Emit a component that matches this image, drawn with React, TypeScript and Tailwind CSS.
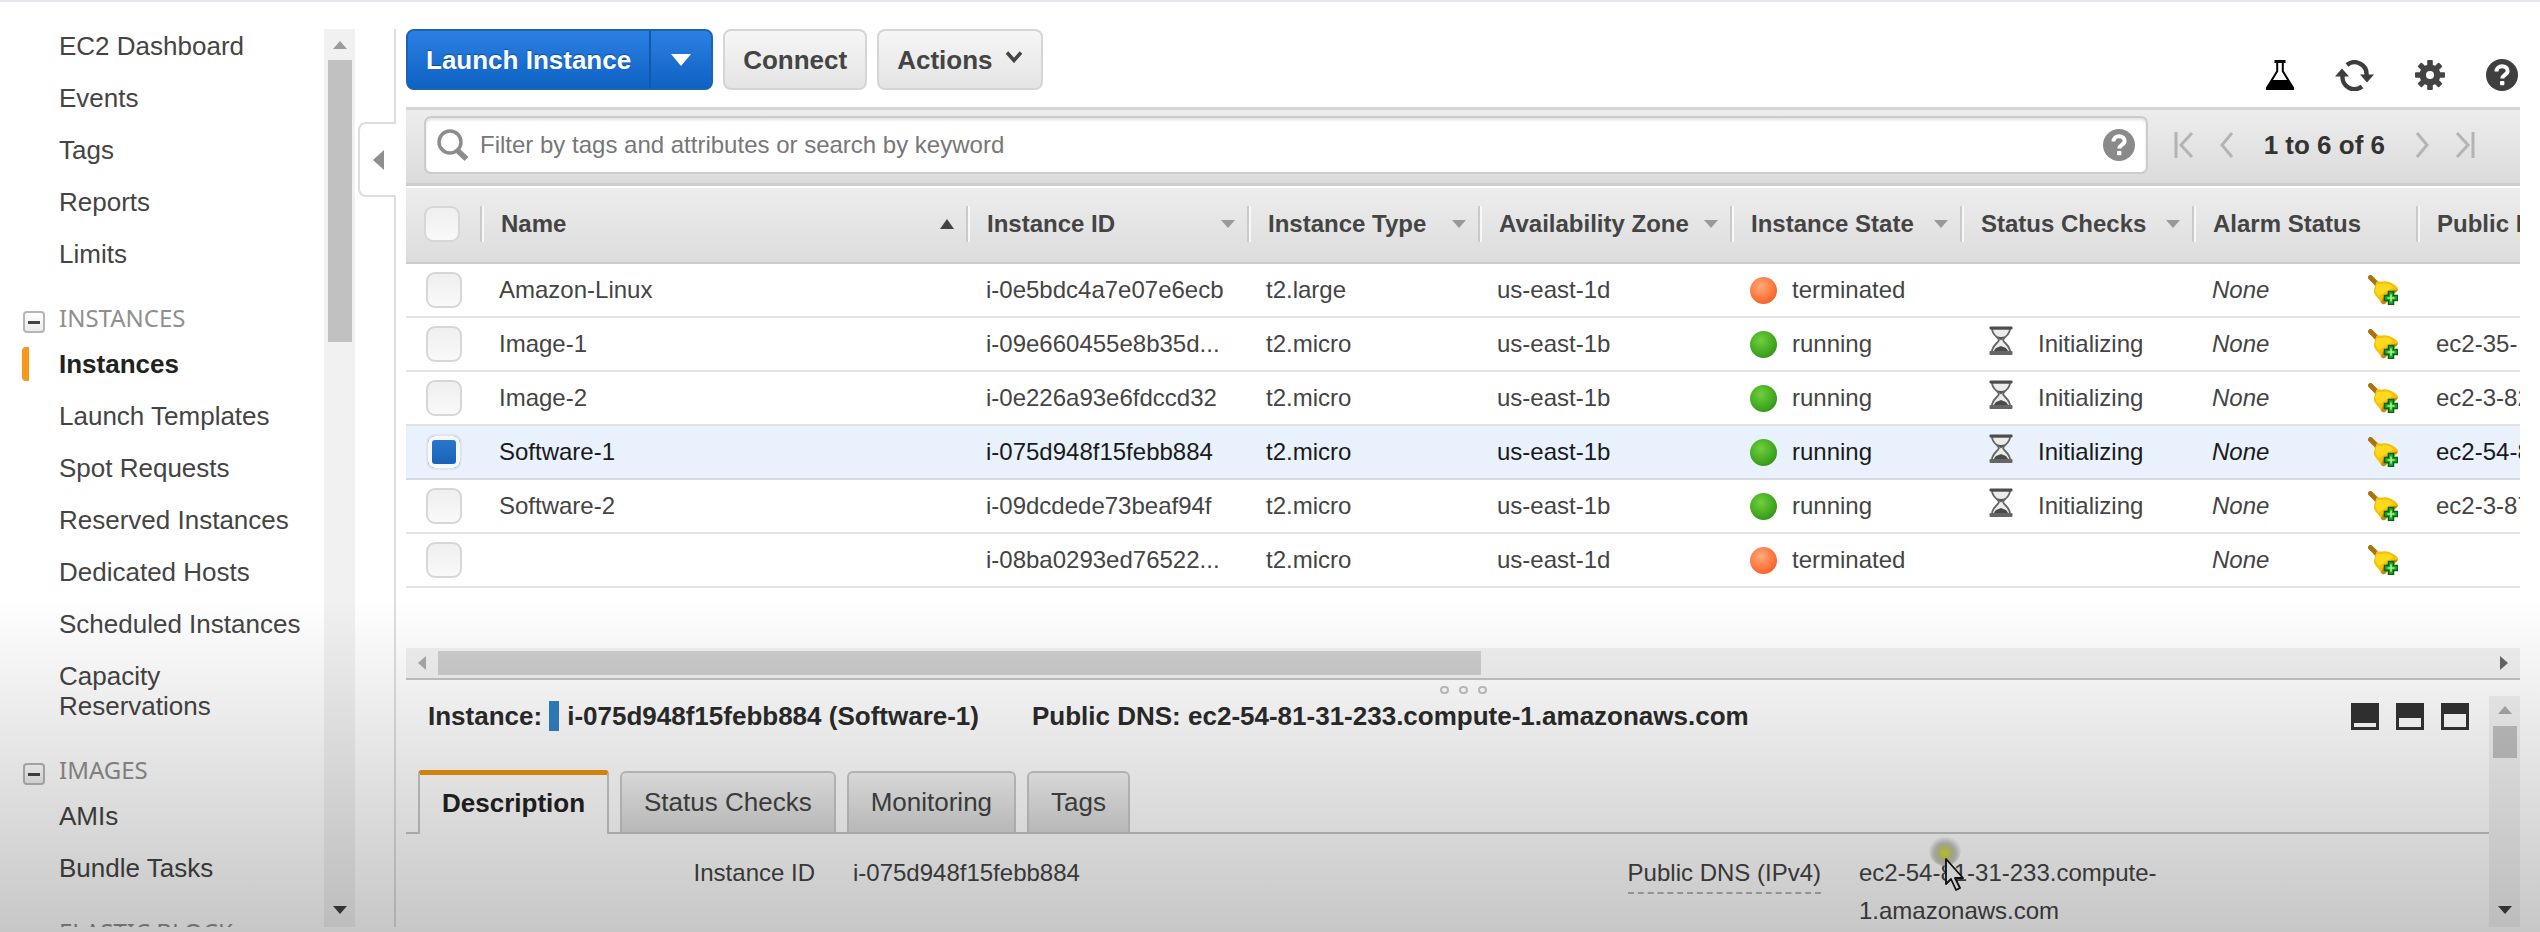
import React from "react";

const navGroups: { heading?: string; items: string[] }[] = [
  { items: ["EC2 Dashboard", "Events", "Tags", "Reports", "Limits"] },
  {
    heading: "INSTANCES",
    items: [
      "Instances",
      "Launch Templates",
      "Spot Requests",
      "Reserved Instances",
      "Dedicated Hosts",
      "Scheduled Instances",
      "Capacity Reservations",
    ],
  },
  { heading: "IMAGES", items: ["AMIs", "Bundle Tasks"] },
  { heading: "ELASTIC BLOCK STORE", items: [] },
];

type Row = {
  name: string;
  id: string;
  type: string;
  zone: string;
  running: boolean;
  dns: string;
  selected?: boolean;
};

const rows: Row[] = [
  { name: "Amazon-Linux", id: "i-0e5bdc4a7e07e6ecb", type: "t2.large", zone: "us-east-1d", running: false, dns: "" },
  { name: "Image-1", id: "i-09e660455e8b35d...", type: "t2.micro", zone: "us-east-1b", running: true, dns: "ec2-35-" },
  { name: "Image-2", id: "i-0e226a93e6fdccd32", type: "t2.micro", zone: "us-east-1b", running: true, dns: "ec2-3-82" },
  { name: "Software-1", id: "i-075d948f15febb884", type: "t2.micro", zone: "us-east-1b", running: true, dns: "ec2-54-81", selected: true },
  { name: "Software-2", id: "i-09dcdede73beaf94f", type: "t2.micro", zone: "us-east-1b", running: true, dns: "ec2-3-87" },
  { name: "", id: "i-08ba0293ed76522...", type: "t2.micro", zone: "us-east-1d", running: false, dns: "" },
];

const columns: { label: string; sort?: "asc" | "menu" }[] = [
  { label: "Name", sort: "asc" },
  { label: "Instance ID", sort: "menu" },
  { label: "Instance Type", sort: "menu" },
  { label: "Availability Zone", sort: "menu" },
  { label: "Instance State", sort: "menu" },
  { label: "Status Checks", sort: "menu" },
  { label: "Alarm Status" },
  { label: "Public DNS (IPv4)" },
];

function Triangle({ dir, className }: { dir: "up" | "down" | "left" | "right"; className: string }) {
  const points = {
    up: "0,10 5,0 10,10",
    down: "0,0 10,0 5,10",
    left: "10,0 10,10 0,5",
    right: "0,0 10,5 0,10",
  }[dir];
  return (
    <svg viewBox="0 0 10 10" preserveAspectRatio="none" className={className} aria-hidden="true">
      <polygon points={points} fill="currentColor" />
    </svg>
  );
}

function HelpIcon({ className }: { className: string }) {
  return (
    <svg viewBox="0 0 32 32" className={className} aria-hidden="true">
      <circle cx="16" cy="16" r="16" fill="currentColor" />
      <path d="M10.5 12.5c0-3.4 2.3-5.2 5.6-5.2 3.2 0 5.5 1.8 5.5 4.6 0 4-5.3 3.9-5.3 7.6" fill="none" stroke="#fff" strokeWidth="4" />
      <rect x="14" y="22" width="4.4" height="4.2" rx="1" fill="#fff" />
    </svg>
  );
}

function FlaskIcon() {
  return (
    <svg viewBox="0 0 28 30" className="h-[30px] w-7" aria-hidden="true">
      <path d="M8.500 0h11v3h-1.700v8L28 27.500V30H0v-2.500L10.200 11V3H8.500z" fill="#000" />
      <path d="M12.200 3h3.600v8.600l5.200 8.400H7l5.200-8.400z" fill="#fff" />
    </svg>
  );
}

function RefreshIcon() {
  return (
    <svg viewBox="0 0 39 31" className="h-[31px] w-[39px]" aria-hidden="true" fill="none" stroke="#3d3d3d" strokeWidth="4.400">
      <path d="M12 5A12 12 0 0 1 31.500 15.500" />
      <path d="M27 26.500A12 12 0 0 1 7.600 15.500" />
      <path d="M25 14.500h14l-7 8z" fill="#3d3d3d" stroke="none" />
      <path d="M0 16.500h14l-7-8z" fill="#3d3d3d" stroke="none" />
    </svg>
  );
}

function GearIcon() {
  const teeth = [0, 45, 90, 135];
  return (
    <svg viewBox="0 0 30 30" className="h-[30px] w-[30px]" aria-hidden="true">
      {teeth.map((a) => (
        <rect key={a} x="12.200" y="0" width="5.600" height="30" rx="1" fill="#444" transform={`rotate(${a} 15 15)`} />
      ))}
      <circle cx="15" cy="15" r="10.500" fill="#444" />
      <circle cx="15" cy="15" r="4" fill="#fff" />
    </svg>
  );
}

function Hourglass() {
  return (
    <svg viewBox="0 0 24 30" className="mb-1.5 h-[30px] w-6" aria-hidden="true">
      <path d="M3 2.500c0 7 6 8 7 11.500-1 3.500-7 5-7 12h18c0-7-6-8.500-7-12 1-3.500 7-4.500 7-11.500z" fill="#ececec" stroke="#666" strokeWidth="1.800" />
      <path d="M5 25c1.500-4 4.500-3.500 7-5 2.500 1.500 5.500 1 7 5z" fill="#4a4a4a" />
      <path d="M8 10c2.500 1.200 5.500 1.200 8 0-1 2-3 3-4 4.500C11 13 9 12 8 10z" fill="#555" />
      <rect x="0.500" y="0.500" width="23" height="3" rx="1" fill="#4c4c4c" />
      <rect x="0.500" y="25" width="23" height="4" rx="1" fill="#666" />
    </svg>
  );
}

function AlarmBell() {
  return (
    <svg viewBox="0 0 30 30" className="h-[30px] w-[30px]" aria-hidden="true">
      <path d="M2.500 2.500l7 7" stroke="#a8740c" strokeWidth="5" strokeLinecap="round" />
      <path d="M8.500 6.500C14 7 17 5.500 21 7c3.500 1.300 8 4 9 6.500.5 1.500-1 3-2.500 4L18 28c-1.500 1.800-4 1.500-5-.5-3.500-6-8-7.500-7-13z" fill="#f6c008" />
      <path d="M9 9c5 .5 8-1.500 12 0 2 1 3 2 4 3.500L11 21c-3-3.500-5-6-2-12z" fill="#ffd91f" />
      <path d="M29.500 14.500c0 1.500-1 2.200-2 3L18 28c-1.500 1.800-4 1.500-5-.5 1-5.500 8-12.500 16.500-13z" fill="#c48a16" />
      <path d="M20.500 16.500h5v4h4v5h-4v4h-5v-4h-4v-5h4z" fill="#1fae24" stroke="#08620f" strokeWidth="1.500" />
      <path d="M23 19.500v7M19.500 23h7" stroke="#a5f598" strokeWidth="1.600" />
    </svg>
  );
}

function StateDot({ running }: { running: boolean }) {
  return (
    <span
      className={
        running
          ? "h-[27px] w-[27px] shrink-0 rounded-full bg-[radial-gradient(circle_at_40%_35%,#6fd03c,#3fa51f_60%,#2b7d16)]"
          : "h-[27px] w-[27px] shrink-0 rounded-full bg-[radial-gradient(circle_at_40%_35%,#ffab7c,#ff6f35_60%,#d9531e)]"
      }
    />
  );
}

const checkboxClass =
  "block h-9 w-9 appearance-none rounded-[9px] border-2 border-[#d6d6d6] bg-linear-to-b from-[#efefef] to-[#f9f9f9] checked:border-[#e3e3ea] checked:from-[#2c79cc] checked:to-[#1560b5] checked:shadow-[inset_0_0_0_4px_#f4f8fd]";

function Sidebar() {
  return (
    <aside className="flex w-[355px] shrink-0">
      <nav aria-label="EC2" className="min-w-0 flex-1 overflow-hidden pt-0.5 pr-[18px]">
        {navGroups.map((group, g) => (
          <section key={g} className={g > 0 ? "mt-[34px]" : ""}>
            {group.heading && (
              <div className="flex items-start gap-3.5 pl-[23px]">
                {group.items.length > 0 ? (
                  <button
                    aria-label={`Collapse ${group.heading}`}
                    className="mt-2 flex h-[22px] w-[22px] shrink-0 items-center justify-center rounded-[4px] border-2 border-[#b5b5b5] bg-linear-to-b from-white to-[#ececec]"
                  >
                    <span className="h-[3px] w-3 bg-[#444]" />
                  </button>
                ) : (
                  <span className="w-[22px] shrink-0" />
                )}
                <h2 className="font-['Noto_Sans',sans-serif] text-[24px] leading-[30px] text-[#8f8f8f]">{group.heading}</h2>
              </div>
            )}
            <ul className={group.heading ? "mt-4 flex flex-col gap-[22px]" : "flex flex-col gap-[22px]"}>
              {group.items.map((item) =>
                item === "Instances" ? (
                  <li key={item} className="flex items-center pl-[22px]">
                    <span className="-my-0.5 h-[34px] w-[7px] rounded-l-[4px] bg-[#f7981d]" />
                    <a href="#instances" aria-current="page" className="ml-[30px] font-bold text-[#222]">
                      {item}
                    </a>
                  </li>
                ) : (
                  <li key={item} className="pl-[59px]">
                    <a href={`#${item}`} className="block">
                      {item}
                    </a>
                  </li>
                )
              )}
            </ul>
          </section>
        ))}
      </nav>
      <div className="flex w-[31px] flex-col items-center bg-[#f1f1f1]">
        <Triangle dir="up" className="mt-3 h-2 w-3.5 text-[#9b9b9b]" />
        <span className="mt-[11px] h-[282px] w-6 bg-[#c1c1c1]" />
        <Triangle dir="down" className="mt-auto mb-[13px] h-2 w-3.5 text-[#404040]" />
      </div>
    </aside>
  );
}

function CollapseRail() {
  return (
    <div className="flex w-[41px] shrink-0 flex-col">
      <span className="h-[93px] border-r-2 border-[#dedede]" />
      <button
        aria-label="Collapse navigation"
        className="ml-[3px] flex h-[75px] items-center justify-center rounded-l-[8px] border-2 border-r-0 border-[#dedede]"
      >
        <Triangle dir="left" className="h-5 w-[11px] text-[#8f8f8f]" />
      </button>
      <span className="flex-1 border-r-2 border-[#dedede]" />
    </div>
  );
}

function Toolbar() {
  const gray =
    "flex h-[61px] items-center rounded-[8px] border-2 border-[#d5d5d5] bg-linear-to-b from-[#f6f6f6] to-[#e4e4e4] px-[18px] font-bold text-[#444]";
  return (
    <div className="flex h-[78px] shrink-0 items-start justify-between">
      <div className="flex gap-2.5">
        <div className="flex h-[61px] rounded-[8px] border-2 border-[#1a63b5] bg-linear-to-b from-[#2b80e4] to-[#0d62c2] text-white">
          <button className="px-[18px] font-bold [text-shadow:0_-1px_1px_#0b4d99]">Launch Instance</button>
          <button aria-label="Launch options" className="flex w-[62px] items-center justify-center border-l-2 border-[#1059ad]">
            <Triangle dir="down" className="h-3 w-5 text-white" />
          </button>
        </div>
        <button className={gray}>Connect</button>
        <button className={`${gray} gap-3`}>
          Actions
          <svg viewBox="0 0 18 12" className="mb-1.5 h-3 w-[18px]" aria-hidden="true">
            <path d="M2 1.500l7 8 7-8" fill="none" stroke="#444" strokeWidth="3.500" />
          </svg>
        </button>
      </div>
      <div className="mt-[30px] flex items-center gap-[41px] pr-0.5">
        <button aria-label="Experiments">
          <FlaskIcon />
        </button>
        <button aria-label="Refresh">
          <RefreshIcon />
        </button>
        <button aria-label="Settings">
          <GearIcon />
        </button>
        <button aria-label="Help">
          <HelpIcon className="h-8 w-8 text-[#3f3f3f]" />
        </button>
      </div>
    </div>
  );
}

function PageArrow({ label, d, wide }: { label: string; d: string; wide?: boolean }) {
  return (
    <button aria-label={label}>
      <svg
        viewBox={wide ? "0 0 20 26" : "0 0 14 26"}
        className={wide ? "h-[26px] w-5" : "h-[26px] w-3.5"}
        fill="none"
        stroke="#b4b4b4"
        strokeWidth="3"
        aria-hidden="true"
      >
        <path d={d} />
      </svg>
    </button>
  );
}

function FilterBar() {
  return (
    <div className="flex h-[79px] shrink-0 items-start gap-[26px] border-y-[3px] border-t-[#d5d5d5] border-b-[#cdcdcd] bg-linear-to-b from-[#ededed] to-[#dbdbdb] pt-1.5 pr-[45px] pl-[18px]">
      <div className="flex h-[58px] flex-1 items-center rounded-[7px] border-2 border-[#cbcbcb] bg-white px-[11px] shadow-[inset_0_2px_3px_#e2e2e2]">
        <svg viewBox="0 0 32 32" className="h-8 w-8" fill="none" stroke="#8c8c8c" aria-hidden="true">
          <circle cx="13" cy="13" r="11" strokeWidth="3.500" />
          <path d="M20 21l9.500 9" strokeWidth="5.500" />
        </svg>
        <input
          aria-label="Filter instances"
          placeholder="Filter by tags and attributes or search by keyword"
          className="ml-[11px] min-w-0 flex-1 bg-transparent text-[24px] outline-none placeholder:text-[#777]"
        />
        <button aria-label="Filter help">
          <HelpIcon className="h-8 w-8 text-[#8a8a8a]" />
        </button>
      </div>
      <div className="flex h-[58px] items-center gap-[26px]">
        <PageArrow label="First page" wide d="M2 0v26M18 1L7 13l11 12" />
        <PageArrow label="Previous page" d="M12 1L2 13l10 12" />
        <span className="mx-1 font-bold text-[#333]">1 to 6 of 6</span>
        <PageArrow label="Next page" d="M2 1l10 12L2 25" />
        <PageArrow label="Last page" wide d="M18 0v26M2 1l11 12L2 25" />
      </div>
    </div>
  );
}

function InstanceTable() {
  return (
    <div className="mt-0.5 min-h-0 flex-1 overflow-hidden">
      <table className="w-full table-fixed border-separate border-spacing-0 text-left text-[24px] leading-[30px]">
        <colgroup>
          <col className="w-[74px]" />
          <col />
          <col className="w-[281px]" />
          <col className="w-[231px]" />
          <col className="w-[252px]" />
          <col className="w-[230px]" />
          <col className="w-[232px]" />
          <col className="w-[224px]" />
          <col className="w-[104px]" />
        </colgroup>
        <thead>
          <tr className="h-[76px] bg-linear-to-b from-[#ededed] to-[#dcdcdc]">
            <th className="border-b-2 border-[#cbcbcb] pt-[18px] pl-[18px] align-top">
              <input type="checkbox" aria-label="Select all" className={checkboxClass} />
            </th>
            {columns.map((c) => (
              <th key={c.label} className="overflow-hidden border-b-2 border-[#cbcbcb] pt-[18px] align-top">
                <div className="flex h-9 items-center justify-between border-l-2 border-[#cacaca] pr-3 pl-[19px] whitespace-nowrap text-[#444] shadow-[inset_2px_0_0_#f8f8f8]">
                  {c.label}
                  {c.sort === "asc" && <Triangle dir="up" className="h-2.5 w-3.5 shrink-0 text-[#444]" />}
                  {c.sort === "menu" && <Triangle dir="down" className="h-2 w-3.5 shrink-0 text-[#999]" />}
                </div>
              </th>
            ))}
          </tr>
        </thead>
        <tbody>
          {rows.map((r) => (
            <tr
              key={r.id}
              className={
                r.selected
                  ? "h-[54px] bg-[#e8f1fc] text-[#1a1a1a] *:border-b-2 *:border-[#d5dae0]"
                  : "h-[54px] text-[#444] *:border-b-2 *:border-[#e3e3e3]"
              }
            >
              <td className="pl-5">
                <input
                  type="checkbox"
                  aria-label={`Select ${r.name || r.id}`}
                  defaultChecked={r.selected}
                  className={checkboxClass}
                />
              </td>
              <td className="pl-[19px]">{r.name}</td>
              <td className="pl-5 whitespace-nowrap">{r.id}</td>
              <td className="pl-[19px]">{r.type}</td>
              <td className="pl-[19px]">{r.zone}</td>
              <td className="pl-5">
                <span className="flex items-center gap-[15px]">
                  <StateDot running={r.running} />
                  {r.running ? "running" : "terminated"}
                </span>
              </td>
              <td className="pl-[29px]">
                {r.running && (
                  <span className="flex items-center gap-[25px]">
                    <Hourglass />
                    Initializing
                  </span>
                )}
              </td>
              <td className="pr-[18px] pl-5">
                <span className="flex items-center justify-between">
                  <em>None</em>
                  <AlarmBell />
                </span>
              </td>
              <td className="overflow-hidden pl-5 whitespace-nowrap">{r.dns}</td>
            </tr>
          ))}
        </tbody>
      </table>
    </div>
  );
}

function WindowIcon({ split }: { split: number }) {
  return (
    <svg viewBox="0 0 28 27" className="h-[27px] w-7" aria-hidden="true">
      <rect width="28" height="27" fill="#333" />
      <rect x="3" y={split} width="22" height={24 - split} fill="#fff" />
    </svg>
  );
}

function DetailPanel() {
  const tab =
    "h-[61px] rounded-t-[6px] border-2 border-b-0 border-[#c9c9c9] bg-linear-to-b from-[#f3f3f3] to-[#d9d9d9] px-[22px] pb-0.5";
  return (
    <section aria-label="Instance details" className="flex h-[247px] shrink-0 flex-col">
      <div className="flex h-4 items-end justify-center gap-2.5 pb-0.5">
        {[0, 1, 2].map((i) => (
          <span key={i} className="h-2 w-[9px] rounded-[4px] border-2 border-[#c2c2c2]" />
        ))}
      </div>
      <div className="flex min-h-0 flex-1">
        <div className="min-w-0 flex-1 overflow-hidden">
          <div className="flex h-10 items-center justify-between pr-5 pl-[22px] font-bold text-[#2b2b2b]">
            <p className="flex items-center">
              Instance:
              <span className="mr-2 ml-[7px] h-[30px] w-2.5 bg-[#2f80c3]" />
              i-075d948f15febb884 (Software-1)
              <span className="ml-[53px]">Public DNS: ec2-54-81-31-233.compute-1.amazonaws.com</span>
            </p>
            <div className="flex gap-[17px]">
              <button aria-label="Minimize panel">
                <WindowIcon split={20} />
              </button>
              <button aria-label="Split panel">
                <WindowIcon split={15} />
              </button>
              <button aria-label="Maximize panel">
                <WindowIcon split={11} />
              </button>
            </div>
          </div>
          <div role="tablist" className="mt-[34px] flex items-end gap-[11px] border-b-2 border-[#c6c6c6] pl-3">
            <button
              role="tab"
              aria-selected="true"
              className="-mb-0.5 h-[64px] rounded-t-[4px] border-2 border-t-[5px] border-b-0 border-[#c9c9c9] border-t-[#e8940f] bg-white px-[22px] pb-1 font-bold text-[#222]"
            >
              Description
            </button>
            <button role="tab" aria-selected="false" className={tab}>
              Status Checks
            </button>
            <button role="tab" aria-selected="false" className={tab}>
              Monitoring
            </button>
            <button role="tab" aria-selected="false" className={tab}>
              Tags
            </button>
          </div>
          <dl className="mt-5 grid grid-cols-2 pr-[71px] text-[24px] leading-[38px]">
            <div className="flex gap-[38px]">
              <dt className="w-[409px] shrink-0 text-right">Instance ID</dt>
              <dd>i-075d948f15febb884</dd>
            </div>
            <div className="flex items-start gap-[38px]">
              <dt className="w-[409px] shrink-0 text-right">
                <span className="inline-block border-b-2 border-dashed border-[#b5b5b5]">Public DNS (IPv4)</span>
              </dt>
              <dd className="relative max-w-[320px]">
                ec2-54-81-31-233.compute-1.amazonaws.com
                <span className="absolute -top-5 left-[70px] h-8 w-8 rounded-full bg-[radial-gradient(circle_at_50%_60%,#d3dc3a_8%,#c3c68e_28%,#c4c4c0_42%,transparent_68%)]" />
                <svg viewBox="0 0 20 34" className="absolute top-[3px] left-[86px] h-[34px] w-5" aria-hidden="true">
                  <path d="M1 2v25l5-5 5 11 4-2-5-10h8z" fill="#fff" stroke="#111" strokeWidth="1.800" strokeLinejoin="round" />
                </svg>
              </dd>
            </div>
          </dl>
        </div>
        <div className="flex w-[31px] flex-col items-center bg-[#f1f1f1]">
          <Triangle dir="up" className="mt-2.5 h-2 w-3.5 text-[#a9a9a9]" />
          <span className="mt-3 h-8 w-6 bg-[#c1c1c1]" />
          <Triangle dir="down" className="mt-auto mb-[13px] h-2 w-3.5 text-[#404040]" />
        </div>
      </div>
    </section>
  );
}

export default function App() {
  return (
    <div className="relative flex h-screen overflow-hidden border-t-2 border-[#e4e7ef] bg-white pt-[27px] pb-[5px] font-['Liberation_Sans',Arial,sans-serif] text-[26px] leading-[30px] text-[#444]">
      <Sidebar />
      <CollapseRail />
      <main className="mr-5 ml-2.5 flex min-w-0 flex-1 flex-col">
        <Toolbar />
        <FilterBar />
        <InstanceTable />
        <div className="flex h-[30px] shrink-0 items-center bg-[#f1f1f1] pr-3">
          <Triangle dir="left" className="mr-3 ml-3 h-3.5 w-2 text-[#a9a9a9]" />
          <span className="h-6 w-[calc(50%-8px)] bg-[#cdcdcd]" />
          <Triangle dir="right" className="ml-auto h-3.5 w-2 text-[#666]" />
        </div>
        <hr className="shrink-0 border-t-2 border-[#c4c4c4]" />
        <DetailPanel />
      </main>
      <div className="pointer-events-none absolute inset-x-0 bottom-0 h-[36%] bg-linear-to-b from-black/0 to-black/22" />
    </div>
  );
}
